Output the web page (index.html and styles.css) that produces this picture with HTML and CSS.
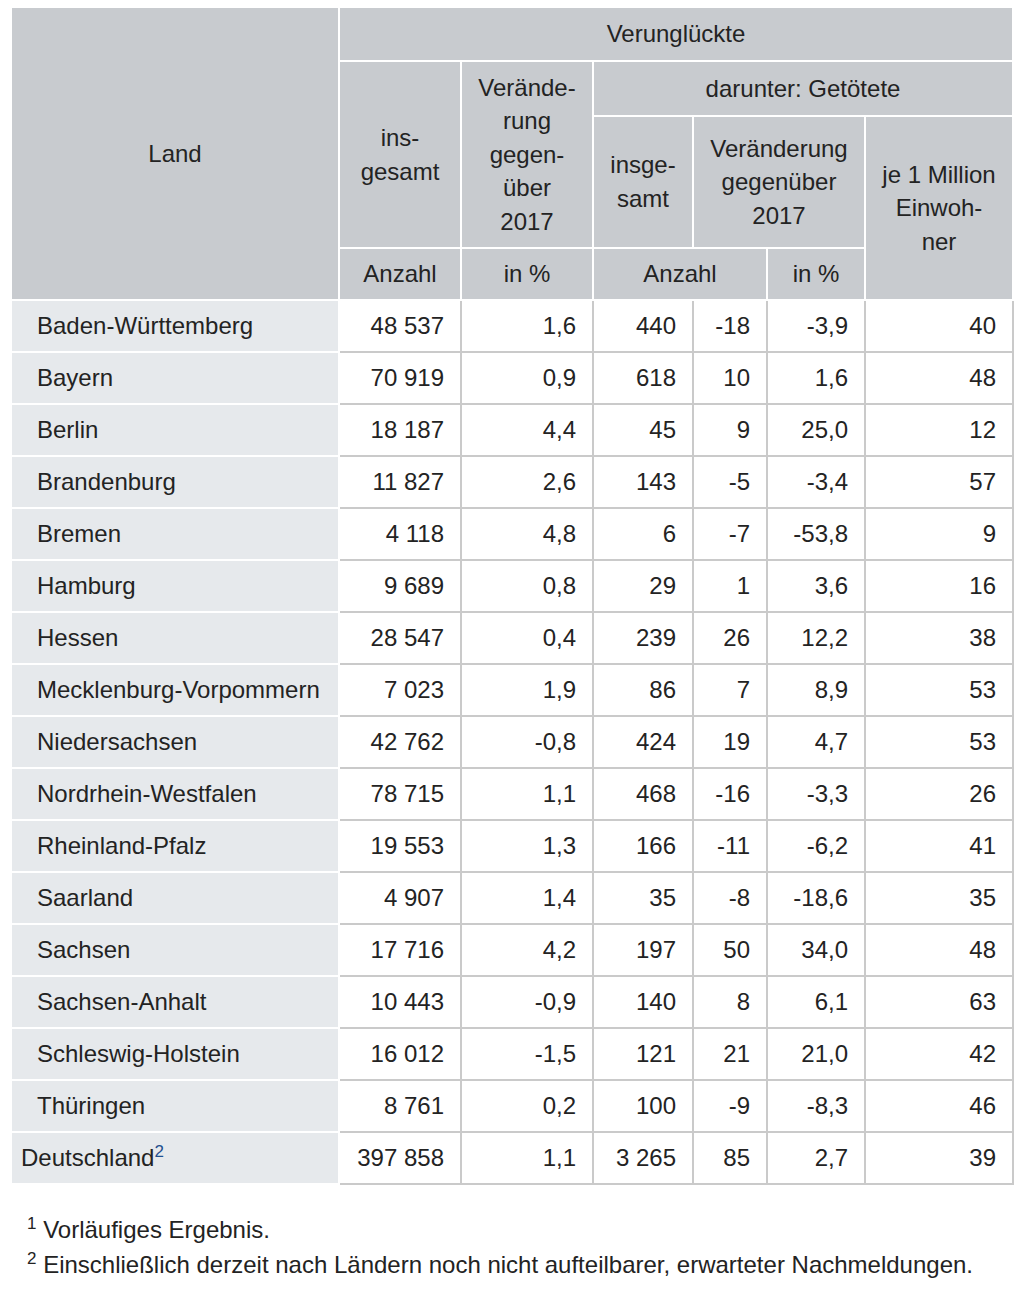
FILE: index.html
```html
<!DOCTYPE html>
<html lang="de">
<head>
<meta charset="utf-8">
<title>Verunglückte nach Ländern</title>
<link rel="stylesheet" href="styles.css">
</head>
<body>
<div class="wrap">
  <table class="data">
    <colgroup>
      <col class="c-land">
      <col class="c-a">
      <col class="c-b">
      <col class="c-c">
      <col class="c-d">
      <col class="c-e">
      <col class="c-f">
    </colgroup>
    <thead>
      <tr>
        <th rowspan="4">Land</th>
        <th colspan="6" class="r1">Verunglückte</th>
      </tr>
      <tr>
        <th rowspan="2">ins-<br>gesamt</th>
        <th rowspan="2">Verände-<br>rung<br>gegen-<br>über<br>2017</th>
        <th colspan="4" class="r2">darunter: Getötete</th>
      </tr>
      <tr>
        <th class="r3">insge-<br>samt</th>
        <th colspan="2">Veränderung<br>gegenüber<br>2017</th>
        <th rowspan="2">je 1 Million<br>Einwoh-<br>ner</th>
      </tr>
      <tr>
        <th class="r4">Anzahl</th>
        <th>in %</th>
        <th colspan="2">Anzahl</th>
        <th>in %</th>
      </tr>
    </thead>
    <tbody>
      <tr><td class="land">Baden-Württemberg</td><td>48 537</td><td>1,6</td><td>440</td><td>-18</td><td>-3,9</td><td>40</td></tr>
      <tr><td class="land">Bayern</td><td>70 919</td><td>0,9</td><td>618</td><td>10</td><td>1,6</td><td>48</td></tr>
      <tr><td class="land">Berlin</td><td>18 187</td><td>4,4</td><td>45</td><td>9</td><td>25,0</td><td>12</td></tr>
      <tr><td class="land">Brandenburg</td><td>11 827</td><td>2,6</td><td>143</td><td>-5</td><td>-3,4</td><td>57</td></tr>
      <tr><td class="land">Bremen</td><td>4 118</td><td>4,8</td><td>6</td><td>-7</td><td>-53,8</td><td>9</td></tr>
      <tr><td class="land">Hamburg</td><td>9 689</td><td>0,8</td><td>29</td><td>1</td><td>3,6</td><td>16</td></tr>
      <tr><td class="land">Hessen</td><td>28 547</td><td>0,4</td><td>239</td><td>26</td><td>12,2</td><td>38</td></tr>
      <tr><td class="land">Mecklenburg-Vorpommern</td><td>7 023</td><td>1,9</td><td>86</td><td>7</td><td>8,9</td><td>53</td></tr>
      <tr><td class="land">Niedersachsen</td><td>42 762</td><td>-0,8</td><td>424</td><td>19</td><td>4,7</td><td>53</td></tr>
      <tr><td class="land">Nordrhein-Westfalen</td><td>78 715</td><td>1,1</td><td>468</td><td>-16</td><td>-3,3</td><td>26</td></tr>
      <tr><td class="land">Rheinland-Pfalz</td><td>19 553</td><td>1,3</td><td>166</td><td>-11</td><td>-6,2</td><td>41</td></tr>
      <tr><td class="land">Saarland</td><td>4 907</td><td>1,4</td><td>35</td><td>-8</td><td>-18,6</td><td>35</td></tr>
      <tr><td class="land">Sachsen</td><td>17 716</td><td>4,2</td><td>197</td><td>50</td><td>34,0</td><td>48</td></tr>
      <tr><td class="land">Sachsen-Anhalt</td><td>10 443</td><td>-0,9</td><td>140</td><td>8</td><td>6,1</td><td>63</td></tr>
      <tr><td class="land">Schleswig-Holstein</td><td>16 012</td><td>-1,5</td><td>121</td><td>21</td><td>21,0</td><td>42</td></tr>
      <tr><td class="land">Thüringen</td><td>8 761</td><td>0,2</td><td>100</td><td>-9</td><td>-8,3</td><td>46</td></tr>
      <tr class="total"><td class="land">Deutschland<sup class="ref">2</sup></td><td>397 858</td><td>1,1</td><td>3 265</td><td>85</td><td>2,7</td><td>39</td></tr>
    </tbody>
  </table>
  <div class="notes">
    <p><sup>1</sup> Vorläufiges Ergebnis.</p>
    <p><sup>2</sup> Einschließlich derzeit nach Ländern noch nicht aufteilbarer, erwarteter Nachmeldungen.</p>
  </div>
</div>
</body>
</html>
```

FILE: styles.css
```css
html, body {
  margin: 0;
  padding: 0;
  background: #ffffff;
}

body {
  font-family: "Liberation Sans", Arial, Helvetica, sans-serif;
  color: #232323;
}

.wrap {
  padding: 6px 0 0 10px;
}

.data {
  border-collapse: collapse;
  table-layout: fixed;
  width: 1004px;
  font-size: 24px;
}

.c-land { width: 328px; }
.c-a { width: 122px; }
.c-b { width: 132px; }
.c-c { width: 100px; }
.c-d { width: 74px; }
.c-e { width: 98px; }
.c-f { width: 148px; }

.data th {
  border: 2px solid #ffffff;
  background: #c8cbcf;
  font-weight: normal;
  line-height: 1.4;
  padding: 0 2px;
  text-align: center;
  vertical-align: middle;
  box-sizing: border-box;
}

.data th.r1 { height: 54px; }
.data th.r2 { height: 55px; }
.data th.r3 { height: 132px; }
.data th.r4 { height: 52px; }

.data td {
  border: 2px solid #cacaca;
  height: 52px;
  box-sizing: border-box;
  padding: 0 16px 0 4px;
  text-align: right;
  vertical-align: middle;
  line-height: 1.4;
  white-space: nowrap;
}

.data td.land {
  border-color: #ffffff;
  background: #e6e9ec;
  text-align: left;
  padding-left: 25px;
}

.data tr.total td.land {
  padding-left: 9px;
}

.ref {
  color: #1f4f8f;
  font-size: 17px;
  line-height: 0;
  vertical-align: 9px;
}

.notes {
  margin-top: 27px;
  padding-left: 17px;
  font-size: 24px;
}

.notes p {
  margin: 0;
  line-height: 35px;
}

.notes sup {
  font-size: 17px;
  line-height: 0;
  vertical-align: 9px;
}
```
